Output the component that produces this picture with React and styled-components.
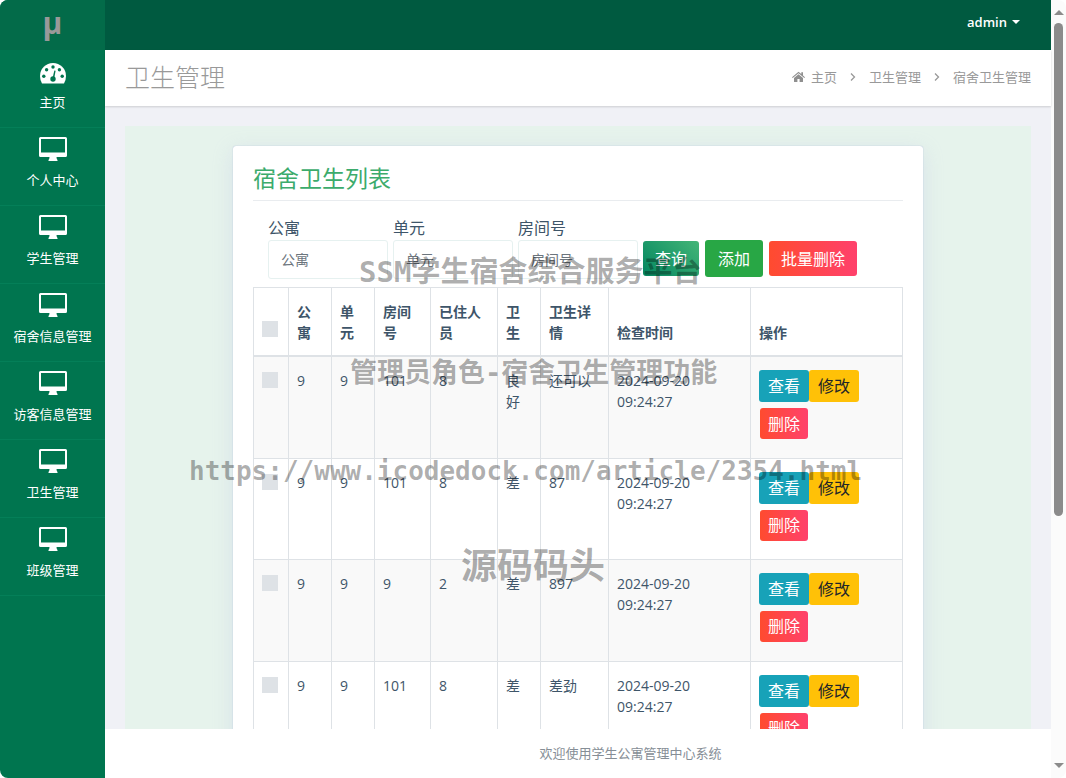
import React, { useState } from 'react';
import styled, { createGlobalStyle } from 'styled-components';

const GlobalStyle = createGlobalStyle`
  * {
    box-sizing: border-box;
  }

  body {
    margin: 0;
    background: #fff;
    color: #3e5569;
    font-family: 'Open Sans', 'Noto Sans CJK SC', sans-serif;
    font-size: 14px;
    line-height: 21px;
  }
`;

const Shell = styled.div`
  position: relative;
  display: flex;
  height: 100vh;
  overflow: hidden;
  border-radius: 8px;
  background: #fff;
`;

const Sidebar = styled.aside`
  flex: 0 0 105px;
  background: #00754f;
`;

const Logo = styled.a`
  display: flex;
  align-items: center;
  justify-content: center;
  height: 50px;
  padding-bottom: 6px;
  background: #036b49;
  color: #999;
  font-size: 30px;
  font-weight: 700;
  text-decoration: none;
`;

const NavItem = styled.a`
  display: flex;
  flex-direction: column;
  align-items: center;
  gap: 6px;
  height: 78px;
  padding-top: 8px;
  border-bottom: 1px solid #047f58;
  color: #fff;
  font-size: 13px;
  text-decoration: none;

  svg {
    display: block;
    width: 30px;
    height: 28px;
  }
`;

const Main = styled.div`
  flex: 1;
  min-width: 0;
  display: flex;
  flex-direction: column;
`;

const TopBar = styled.header`
  flex: 0 0 50px;
  display: flex;
  align-items: center;
  justify-content: flex-end;
  padding: 0 31px 6px;
  background: #005a40;
`;

const UserButton = styled.button`
  display: flex;
  align-items: center;
  gap: 5px;
  padding: 0;
  border: 0;
  background: none;
  color: #fff;
  font: inherit;
  font-size: 13px;
  font-weight: 600;

  &::after {
    content: '';
    border: 4px solid transparent;
    border-top-color: #fff;
    border-bottom: 0;
  }
`;

const PageHead = styled.div`
  flex: 0 0 56px;
  display: flex;
  align-items: center;
  justify-content: space-between;
  padding: 0 20px 2px;
  background: #fff;
  box-shadow: 0 1px 2px rgba(0, 0, 0, 0.15);
  z-index: 1;
`;

const PageTitle = styled.h1`
  margin: 0;
  color: #999;
  font-size: 25px;
  font-weight: 300;
`;

const Breadcrumb = styled.nav`
  display: flex;
  align-items: center;
  gap: 12px;
  color: #999;
  font-size: 13px;

  a {
    display: flex;
    align-items: center;
    gap: 6px;
    color: inherit;
    text-decoration: none;
  }
`;

const Content = styled.main`
  flex: 1;
  min-height: 0;
  overflow: hidden;
  padding: 20px 20px 0;
  background: #f0f1f6;
`;

const Backdrop = styled.div`
  padding: 20px;
  background: #e6f3ec;
`;

const Card = styled.section`
  max-width: 690px;
  margin: 0 auto;
  padding: 19px 20px;
  border-radius: 3px;
  background: #fff;
  box-shadow: 0 0 1px rgba(80, 110, 180, 0.5), 0 5px 20px rgba(180, 185, 230, 0.3);
`;

const CardTitle = styled.h2`
  margin: 0 0 15px;
  padding-bottom: 9px;
  border-bottom: 1px solid #e9ecef;
  color: #3cab6c;
  font-size: 23px;
  font-weight: 400;
  line-height: 26px;
`;

const Filters = styled.form`
  display: flex;
  align-items: flex-end;
  gap: 5px;
  margin-bottom: 8px;
  padding-left: 15px;
`;

const Field = styled.label`
  display: flex;
  flex-direction: column;
  width: 120px;
  font-size: 16px;
  line-height: 24px;
`;

const TextInput = styled.input`
  width: 100%;
  height: 39px;
  padding: 0 12px;
  border: 1px solid #e6f1f0;
  border-radius: 3px;
  background: #fff;
  color: #3e5569;
  font: inherit;
  font-size: 14px;

  &::placeholder {
    color: #6c757d;
  }
`;

const FilterActions = styled.div`
  display: flex;
  align-items: center;
  gap: 6px;
  height: 39px;
  padding-bottom: 2px;
`;

const tones = {
  search: 'linear-gradient(45deg, #048660, #43b577)',
  add: '#28a745',
  danger: 'linear-gradient(90deg, #ff4b2f, #ff416c)',
  info: '#17a2b8',
  warning: '#ffc107',
};

const Button = styled.button`
  height: ${props => (props.$tone === 'add' ? '37px' : '35px')};
  padding: ${props => (props.$tone === 'add' ? '0 13px' : '0 12px')};
  border: 0;
  border-radius: 3px;
  background: ${props => tones[props.$tone]};
  color: ${props => (props.$tone === 'warning' ? '#212529' : '#fff')};
  font: inherit;
  font-size: 16px;
  line-height: 24px;
  white-space: nowrap;
`;

const RowButton = styled(Button)`
  height: ${props => (props.$tone === 'danger' ? '31px' : '32px')};
  margin-left: ${props => (props.$tone === 'danger' ? '1px' : '0')};
  padding: ${props => (props.$tone === 'danger' ? '0 8px' : '0 9px')};
`;

const Table = styled.table`
  width: 100%;
  table-layout: fixed;
  border-collapse: collapse;

  th,
  td {
    padding: 13px 8px 12px;
    border: 1px solid #dee2e6;
    text-align: left;
  }

  th {
    border-bottom-width: 2px;
    font-weight: 700;
    vertical-align: bottom;
  }

  td {
    height: 101px;
    vertical-align: top;
  }

  tbody tr:nth-child(odd) {
    background: #f9f9f9;

    td {
      height: 102px;
    }
  }
`;

const Checkbox = styled.input`
  appearance: none;
  display: block;
  width: 16px;
  height: 16px;
  margin: 2px 0 6px;
  background: #dee2e6;

  &:checked {
    background: #00754f;
  }
`;

const RowActions = styled.div`
  display: flex;
  flex-wrap: wrap;
  row-gap: 6px;
  width: 110px;
`;

const Footer = styled.footer`
  flex: 0 0 49px;
  display: flex;
  align-items: center;
  justify-content: center;
  background: #fff;
  color: #868e96;
  font-size: 13px;
  padding-left: 105px;
`;

const ScrollTrack = styled.div`
  flex: 0 0 15px;
  display: flex;
  flex-direction: column;
  align-items: center;
  padding: 10px 0;
  background: #fbfbfb;
`;

const ScrollThumb = styled.div`
  width: 9px;
  height: 65%;
  margin: 8px 0 auto;
  border-radius: 5px;
  background: #8b8b8b;
`;

const ScrollArrow = styled.span`
  border: 5px solid transparent;
  border-top: ${props => (props.$down ? '5px solid #8b8b8b' : '0')};
  border-bottom: ${props => (props.$down ? '0' : '5px solid #8b8b8b')};
`;

const Watermark = styled.div`
  position: absolute;
  top: ${props => props.$top}px;
  left: ${props => props.$left}px;
  color: rgba(0, 0, 0, 0.32);
  font-family: 'DejaVu Sans Mono', 'Noto Sans CJK SC', monospace;
  font-size: ${props => props.$size}px;
  font-weight: 700;
  line-height: 40px;
  white-space: nowrap;
  pointer-events: none;
  z-index: 5;
`;

const DashboardIcon = () => (
  <svg viewBox="0 0 30 28" aria-hidden="true">
    <path fill="#fff" d="M4 25.500 Q2 22 2 18 A13 13 0 0 1 28 18 Q28 22 26 25.500 Z" />
    <g fill="#00754f">
      <circle cx="5.800" cy="18.300" r="1.700" />
      <circle cx="8.600" cy="11.800" r="1.700" />
      <circle cx="15" cy="9" r="1.700" />
      <circle cx="21.400" cy="11.800" r="1.700" />
      <circle cx="24.200" cy="18.300" r="1.700" />
      <circle cx="15" cy="21" r="2.700" />
      <path d="M14.300 21 L16.400 12.500 L17.600 12.800 L16 21.500 Z" />
    </g>
  </svg>
);

const DesktopIcon = () => (
  <svg viewBox="0 0 30 28" aria-hidden="true">
    <path
      fill="#fff"
      fillRule="evenodd"
      d="M2.500 1 H27.500 Q29 1 29 2.500 V19.500 Q29 21 27.500 21 H18.500 Q18.500 23 19.500 24 V25 H10.500 V24 Q11.500 23 11.500 21 H2.500 Q1 21 1 19.500 V2.500 Q1 1 2.500 1 Z M3 3 V16.500 H27 V3 Z"
    />
  </svg>
);

const HomeIcon = () => (
  <svg width="13" height="12" viewBox="0 0 13 12" aria-hidden="true">
    <path
      fill="#8f8f8f"
      d="M6.500 3.200 L11 7 V10.500 Q11 11 10.500 11 H7.600 V8 H5.400 V11 H2.500 Q2 11 2 10.500 V7 Z M6.500 .7 L9.300 3 V1.300 H11 V4.500 L13 6.200 L12.300 7 L6.500 2.200 L.7 7 L0 6.200 Z"
    />
  </svg>
);

const ChevronIcon = () => (
  <svg width="8" height="10" viewBox="0 0 8 10" aria-hidden="true">
    <path d="M2 1.500 L5.500 5 L2 8.500" fill="none" stroke="#999" strokeWidth="1.300" />
  </svg>
);

const navItems = ['主页', '个人中心', '学生管理', '宿舍信息管理', '访客信息管理', '卫生管理', '班级管理'];
const fields = ['公寓', '单元', '房间号'];
const columns = [
  { label: '公寓', width: 43 },
  { label: '单元', width: 43 },
  { label: '房间号', width: 56 },
  { label: '已住人员', width: 67 },
  { label: '卫生', width: 43 },
  { label: '卫生详情', width: 68 },
  { label: '检查时间', width: 142 },
  { label: '操作' },
];
const records = [
  ['9', '9', '101', '8', '良好', '还可以', '2024-09-20 09:24:27'],
  ['9', '9', '101', '8', '差', '87', '2024-09-20 09:24:27'],
  ['9', '9', '9', '2', '差', '897', '2024-09-20 09:24:27'],
  ['9', '9', '101', '8', '差', '差劲', '2024-09-20 09:24:27'],
];

const App = () => {
  const [selected, setSelected] = useState([]);

  const toggleRow = (index) => {
    setSelected((prev) =>
      prev.includes(index) ? prev.filter((i) => i !== index) : [...prev, index]
    );
  };

  const toggleAll = () => {
    setSelected((prev) => (prev.length === records.length ? [] : records.map((_, i) => i)));
  };

  return (
    <Shell>
      <GlobalStyle />
      <Sidebar>
        <Logo href="#">μ</Logo>
        {navItems.map((item, index) => (
          <NavItem key={item} href="#">
            {index === 0 ? <DashboardIcon /> : <DesktopIcon />}
            {item}
          </NavItem>
        ))}
      </Sidebar>

      <Main>
        <TopBar>
          <UserButton type="button">admin</UserButton>
        </TopBar>
        <PageHead>
          <PageTitle>卫生管理</PageTitle>
          <Breadcrumb>
            <a href="#"><HomeIcon />主页</a>
            <ChevronIcon />
            <span>卫生管理</span>
            <ChevronIcon />
            <span>宿舍卫生管理</span>
          </Breadcrumb>
        </PageHead>

        <Content>
          <Backdrop>
            <Card>
              <CardTitle>宿舍卫生列表</CardTitle>
              <Filters onSubmit={(e) => e.preventDefault()}>
                {fields.map((field) => (
                  <Field key={field}>
                    {field}
                    <TextInput placeholder={field} />
                  </Field>
                ))}
                <FilterActions>
                  <Button $tone="search">查询</Button>
                  <Button type="button" $tone="add">添加</Button>
                  <Button type="button" $tone="danger">批量删除</Button>
                </FilterActions>
              </Filters>

              <Table>
                <colgroup>
                  <col width={35} />
                  {columns.map((column) => (
                    <col key={column.label} width={column.width} />
                  ))}
                </colgroup>
                <thead>
                  <tr>
                    <th>
                      <Checkbox
                        type="checkbox"
                        aria-label="全选"
                        checked={selected.length === records.length}
                        onChange={toggleAll}
                      />
                    </th>
                    {columns.map((column) => (
                      <th key={column.label}>{column.label}</th>
                    ))}
                  </tr>
                </thead>
                <tbody>
                  {records.map((record, index) => (
                    <tr key={index}>
                      <td>
                        <Checkbox
                          type="checkbox"
                          aria-label={`选择 ${index + 1}`}
                          checked={selected.includes(index)}
                          onChange={() => toggleRow(index)}
                        />
                      </td>
                      {record.map((value, i) => (
                        <td key={i}>{value}</td>
                      ))}
                      <td>
                        <RowActions>
                          <RowButton type="button" $tone="info">查看</RowButton>
                          <RowButton type="button" $tone="warning">修改</RowButton>
                          <RowButton type="button" $tone="danger">删除</RowButton>
                        </RowActions>
                      </td>
                    </tr>
                  ))}
                </tbody>
              </Table>
            </Card>
          </Backdrop>
        </Content>
        <Footer>欢迎使用学生公寓管理中心系统</Footer>
      </Main>

      <ScrollTrack>
        <ScrollArrow />
        <ScrollThumb />
        <ScrollArrow $down />
      </ScrollTrack>

      <Watermark $top={252} $left={359} $size={29}>SSM学生宿舍综合服务平台</Watermark>
      <Watermark $top={353} $left={350} $size={27}>管理员角色-宿舍卫生管理功能</Watermark>
      <Watermark $top={451} $left={189} $size={26}>https://www.icodedock.com/article/2354.html</Watermark>
      <Watermark $top={547} $left={461} $size={36}>源码码头</Watermark>
    </Shell>
  );
};

export default App;
